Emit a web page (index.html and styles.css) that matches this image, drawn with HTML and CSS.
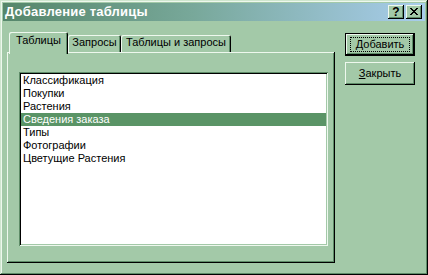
FILE: index.html
```html
<!DOCTYPE html>
<html>
<head>
<meta charset="utf-8">
<link rel="stylesheet" href="styles.css">
</head>
<body>
<div class="window">
  <div class="titlebar">
    <span class="title">Добавление таблицы</span>
    <div class="tb-buttons">
      <div class="tb-btn help">?</div>
      <div class="tb-btn close">
        <svg width="8" height="7" viewBox="0 0 8 7" shape-rendering="crispEdges"><path fill="#000" d="M0 0h2v1h-2z M6 0h2v1h-2z M1 1h2v1h-2z M5 1h2v1h-2z M2 2h4v1h-4z M3 3h2v1h-2z M2 4h4v1h-4z M1 5h2v1h-2z M5 5h2v1h-2z M0 6h2v1h-2z M6 6h2v1h-2z"/></svg>
      </div>
    </div>
  </div>
  <div class="content">
    <div class="tabs-area">
      <div class="tabstrip">
        <div class="tab active t1">Таблицы</div>
        <div class="tab t2">Запросы</div>
        <div class="tab t3">Таблицы и запросы</div>
      </div>
      <div class="panel">
        <div class="listbox">
          <div class="item">Классификация</div>
          <div class="item">Покупки</div>
          <div class="item">Растения</div>
          <div class="item selected">Сведения заказа</div>
          <div class="item">Типы</div>
          <div class="item">Фотографии</div>
          <div class="item">Цветущие Растения</div>
        </div>
      </div>
    </div>
    <div class="buttons">
      <div class="btn default"><span class="focus"><u>Д</u>обавить</span></div>
      <div class="btn"><span class="label"><u>З</u>акрыть</span></div>
    </div>
  </div>
</div>
</body>
</html>
```

FILE: styles.css
```css
* { box-sizing: border-box; }
html, body { margin: 0; padding: 0; background: #a3c9a8; }
body { font-family: "Liberation Sans", Arial, sans-serif; font-size: 11px; color: #000; }

.window {
  width: 428px;
  height: 275px;
  padding: 3px;
  background: #a3c9a8;
  box-shadow: inset -1px -1px 0 #000, inset 1px 1px 0 #cfe6cf, inset -2px -2px 0 #5e8c68, inset 2px 2px 0 #eef8ee;
}

.titlebar {
  height: 18px;
  display: flex;
  align-items: center;
  padding: 0 3px 0 2px;
  background: linear-gradient(to right, #55866a 0%, #78a89a 45%, #a8cdec 100%);
}
.title {
  font-weight: bold;
  font-size: 13px;
  color: #fff;
  letter-spacing: 0.2px;
  line-height: 18px;
}
.tb-buttons { margin-left: auto; display: flex; gap: 2px; }
.tb-btn {
  width: 16px;
  height: 14px;
  background: #a3c9a8;
  display: flex;
  align-items: center;
  justify-content: center;
  box-shadow: inset -1px -1px 0 #000, inset 1px 1px 0 #eef8ee, inset -2px -2px 0 #5e8c68;
}
.help { font-weight: bold; font-size: 12px; line-height: 14px; padding-bottom: 1px; }
.close svg { display: block; margin-top: -1px; }

.content {
  display: flex;
  padding: 11px 0 0 4px;
}
.tabs-area { width: 328px; display: flex; flex-direction: column; }
.tabstrip {
  height: 20px;
  display: flex;
  align-items: flex-end;
  padding-left: 2px;
}
.tab {
  height: 17px;
  text-align: center;
  line-height: 15px;
  background: #a3c9a8;
  border-radius: 2px 2px 0 0;
  box-shadow: inset 1px 1px 0 #eef8ee, inset -1px 0 0 #000, inset -2px 0 0 #5e8c68;
}
.t1 { width: 59px; }
.t2 { width: 53px; }
.t3 { width: 110px; }
.tab.active {
  height: 22px;
  margin-bottom: -2px;
  line-height: 17px;
  position: relative;
  z-index: 1;
}
.panel {
  height: 211px;
  padding: 20px 0 0 12px;
  box-shadow: inset -1px -1px 0 #000, inset 1px 1px 0 #eef8ee, inset -2px -2px 0 #5e8c68;
}
.listbox {
  width: 309px;
  height: 174px;
  background: #fff;
  padding: 2px;
  box-shadow: inset 1px 1px 0 #5e8c68, inset -1px -1px 0 #eef8ee, inset 2px 2px 0 #000, inset -2px -2px 0 #a3c9a8;
}
.item {
  height: 13px;
  line-height: 13px;
  padding-left: 2px;
  white-space: nowrap;
}
.item.selected { background: #5a9466; color: #fff; }

.buttons {
  display: flex;
  flex-direction: column;
  gap: 6px;
  margin: 1px 0 0 10px;
}
.btn {
  width: 70px;
  height: 23px;
  display: flex;
  align-items: center;
  justify-content: center;
  background: #a3c9a8;
  box-shadow: inset -1px -1px 0 #000, inset 1px 1px 0 #eef8ee, inset -2px -2px 0 #5e8c68;
}
.btn.default {
  box-shadow: inset 0 0 0 1px #000, inset -2px -2px 0 #000, inset 2px 2px 0 #eef8ee, inset -3px -3px 0 #5e8c68;
}
.focus {
  display: block;
  width: 60px;
  height: 15px;
  line-height: 13px;
  text-align: center;
  border: 1px dotted #000;
}
.label { line-height: 13px; }
u { text-decoration: underline; text-underline-offset: 1px; }
```
